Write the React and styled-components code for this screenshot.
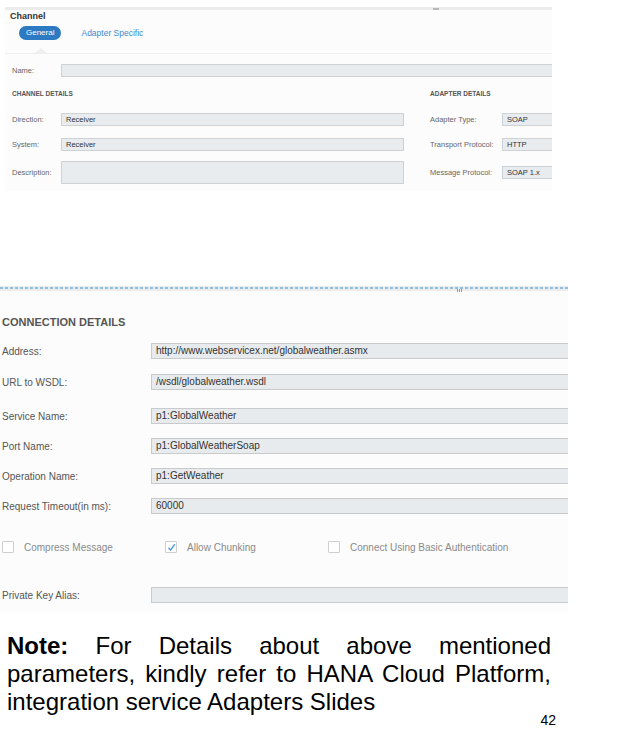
import React from 'react'
import styled, { createGlobalStyle } from 'styled-components';

const GlobalStyle = createGlobalStyle`
  body {
    margin: 0;
    background: #ffffff;
    font-family: "Liberation Sans", Arial, sans-serif;
  }
`;

const Slide = styled.div`
  width: 620px;
  height: 752px;
  overflow: hidden;
  display: flex;
  flex-direction: column;
`;

/* ---------- top screenshot (Channel) ---------- */

const TopShot = styled.section`
  margin: 7px 0 0 5px;
  width: 547px;
  padding-bottom: 7px;
  background: #fcfcfc;
  overflow: hidden;
  display: flex;
  flex-direction: column;
`;

const TopBar = styled.div`
  height: 3px;
  background: #ececec;
  position: relative;

  &::after {
    content: '';
    position: absolute;
    left: 428px;
    top: 1px;
    width: 6px;
    height: 2px;
    background: #b9b9b9;
  }
`;

const ShotTitle = styled.div`
  margin: 1px 0 0 5px;
  font-size: 9px;
  line-height: 11px;
  font-weight: 700;
  color: #333333;
`;

const Tabs = styled.div`
  display: flex;
  align-items: center;
  gap: 20px;
  margin: 4px 0 0 14px;
`;

const Tab = styled.div`
  height: 14px;
  line-height: 14px;
  border-radius: 7px;
  font-size: ${p => (p.$active ? '8px' : '8.5px')};
  color: ${p => (p.$active ? '#ffffff' : '#3b8ad0')};
  background: ${p => (p.$active ? '#2c7ac2' : 'transparent')};
  padding: ${p => (p.$active ? '0 7px' : '0')};
`;

const Separator = styled.div`
  margin-top: 13px;
  height: 1px;
  background: #efefef;
  position: relative;

  &::before {
    content: '';
    position: absolute;
    left: 30px;
    bottom: 1px;
    border-left: 6px solid transparent;
    border-right: 6px solid transparent;
    border-bottom: 5px solid #efefef;
  }
`;

const SmallRow = styled.div`
  display: flex;
  align-items: center;
  height: ${p => p.$h || 13}px;
  margin-top: ${p => p.$mt || 0}px;
  padding-left: ${p => p.$pl || 0}px;
`;

const SmallLabel = styled.div`
  width: ${p => p.$w}px;
  flex-shrink: 0;
  font-size: 7.5px;
  color: #666666;
`;

const SmallInput = styled.div`
  box-sizing: border-box;
  height: ${p => p.$h || 13}px;
  flex: 1;
  margin-right: ${p => (p.$cut ? '-2px' : '0')};
  background: #e9ecee;
  border: 1px solid #cfd2d4;
  padding-left: 4px;
  font-size: 7.5px;
  line-height: 11px;
  color: #333333;
`;

const Details = styled.div`
  display: flex;
  gap: 26px;
  padding-left: 7px;
  margin-top: 13px;
`;

const Column = styled.div`
  display: flex;
  flex-direction: column;
  ${p => (p.$w ? `width: ${p.$w}px;` : 'flex: 1;')}
`;

const SmallHead = styled.div`
  font-size: 6.5px;
  line-height: 8px;
  font-weight: 700;
  color: #555555;
  margin-bottom: 15px;
`;

/* ---------- bottom screenshot (Connection) ---------- */

const BottomShot = styled.section`
  margin-top: 95px;
  width: 568px;
  padding-bottom: 9px;
  background: #fcfcfc;
  overflow: hidden;
  display: flex;
  flex-direction: column;
`;

const Divider = styled.div`
  height: 5px;
  position: relative;
  background:
    repeating-linear-gradient(90deg, #8cc0e0 0 3px, transparent 3px 5px) 0 1px / 100% 2px no-repeat,
    #ececec;

  &::after {
    content: '';
    position: absolute;
    left: 457px;
    top: 3px;
    width: 6px;
    height: 3px;
    background: repeating-linear-gradient(90deg, #999999 0 1px, transparent 1px 2px);
  }
`;

const SectionHead = styled.div`
  margin: 25px 0 0 2px;
  font-size: 11px;
  line-height: 12px;
  font-weight: 700;
  color: #555555;
`;

const Row = styled.div`
  display: flex;
  align-items: center;
  height: 16px;
  margin-top: ${p => p.$mt}px;
  padding-left: 2px;
`;

const Label = styled.div`
  width: 149px;
  flex-shrink: 0;
  font-size: 10px;
  color: #555555;
`;

const Input = styled.div`
  box-sizing: border-box;
  flex: 1;
  height: 16px;
  margin-right: -2px;
  background: #e8ebed;
  border: 1px solid #c8cacc;
  padding-left: 4px;
  font-size: 10px;
  line-height: 14px;
  color: #333333;
`;

const CheckRow = styled.div`
  display: flex;
  align-items: center;
  margin-top: 27px;
  padding-left: 2px;
  height: 12px;
`;

const CheckItem = styled.div`
  display: flex;
  align-items: center;
  gap: 10px;
  ${p => (p.$w ? `width: ${p.$w}px;` : 'flex: 1;')}
`;

const Box = styled.div`
  box-sizing: border-box;
  width: 12px;
  height: 12px;
  border: 1px solid #cfcfcf;
  border-radius: 1px;
  background: #ffffff;
  display: flex;
  align-items: center;
  justify-content: center;
`;

const CheckLabel = styled.span`
  font-size: 10px;
  color: #8a8a8a;
`;

/* ---------- slide note ---------- */

const Note = styled.div`
  margin-top: 20px;
  padding: 0 69px 0 7px;
  font-size: 24px;
  line-height: 28px;
  color: #000000;
`;

const NoteLine = styled.div`
  text-align: ${p => (p.$justify ? 'justify' : 'left')};
  text-align-last: ${p => (p.$justify ? 'justify' : 'left')};
  white-space: nowrap;
`;

const PageNo = styled.div`
  display: flex;
  justify-content: flex-end;
  margin-top: -4px;
  padding-right: 64px;
  font-size: 14px;
  line-height: 16px;
  color: #000000;
`;

const connection = [
  { label: 'Address:', value: 'http://www.webservicex.net/globalweather.asmx', mt: 15 },
  { label: 'URL to WSDL:', value: '/wsdl/globalweather.wsdl', mt: 15 },
  { label: 'Service Name:', value: 'p1:GlobalWeather', mt: 18 },
  { label: 'Port Name:', value: 'p1:GlobalWeatherSoap', mt: 14 },
  { label: 'Operation Name:', value: 'p1:GetWeather', mt: 14 },
  { label: 'Request Timeout(in ms):', value: '60000', mt: 14 },
];

function Check({ checked }) {
  return (
    <Box>
      {checked && (
        <svg width="9" height="9" viewBox="0 0 9 9">
          <path d="M1.5 4.8 L3.6 7.2 L7.8 1.2" fill="none" stroke="#4b9bd9" strokeWidth="1.4" />
        </svg>
      )}
    </Box>
  );
}

function App() {
  return (
    <Slide>
      <GlobalStyle />
      <TopShot>
        <TopBar />
        <ShotTitle>Channel</ShotTitle>
        <Tabs>
          <Tab $active>General</Tab>
          <Tab>Adapter Specific</Tab>
        </Tabs>
        <Separator />
        <SmallRow $mt={10} $pl={7}>
          <SmallLabel $w={49}>Name:</SmallLabel>
          <SmallInput $cut />
        </SmallRow>
        <Details>
          <Column $w={392}>
            <SmallHead>CHANNEL DETAILS</SmallHead>
            <SmallRow>
              <SmallLabel $w={49}>Direction:</SmallLabel>
              <SmallInput>Receiver</SmallInput>
            </SmallRow>
            <SmallRow $mt={12}>
              <SmallLabel $w={49}>System:</SmallLabel>
              <SmallInput>Receiver</SmallInput>
            </SmallRow>
            <SmallRow $mt={10} $h={23}>
              <SmallLabel $w={49}>Description:</SmallLabel>
              <SmallInput $h={23} />
            </SmallRow>
          </Column>
          <Column>
            <SmallHead>ADAPTER DETAILS</SmallHead>
            <SmallRow>
              <SmallLabel $w={72}>Adapter Type:</SmallLabel>
              <SmallInput $cut>SOAP</SmallInput>
            </SmallRow>
            <SmallRow $mt={12}>
              <SmallLabel $w={72}>Transport Protocol:</SmallLabel>
              <SmallInput $cut>HTTP</SmallInput>
            </SmallRow>
            <SmallRow $mt={10} $h={23}>
              <SmallLabel $w={72}>Message Protocol:</SmallLabel>
              <SmallInput $cut>SOAP 1.x</SmallInput>
            </SmallRow>
          </Column>
        </Details>
      </TopShot>

      <BottomShot>
        <Divider />
        <SectionHead>CONNECTION DETAILS</SectionHead>
        {connection.map(r => (
          <Row key={r.label} $mt={r.mt}>
            <Label>{r.label}</Label>
            <Input>{r.value}</Input>
          </Row>
        ))}
        <CheckRow>
          <CheckItem $w={163}>
            <Check />
            <CheckLabel>Compress Message</CheckLabel>
          </CheckItem>
          <CheckItem $w={163}>
            <Check checked />
            <CheckLabel>Allow Chunking</CheckLabel>
          </CheckItem>
          <CheckItem>
            <Check />
            <CheckLabel>Connect Using Basic Authentication</CheckLabel>
          </CheckItem>
        </CheckRow>
        <Row $mt={34}>
          <Label>Private Key Alias:</Label>
          <Input />
        </Row>
      </BottomShot>

      <Note>
        <NoteLine $justify><b>Note:</b> For Details about above mentioned</NoteLine>
        <NoteLine $justify>parameters, kindly refer to HANA Cloud Platform,</NoteLine>
        <NoteLine>integration service Adapters Slides</NoteLine>
      </Note>
      <PageNo>42</PageNo>
    </Slide>
  );
}

export default App;
